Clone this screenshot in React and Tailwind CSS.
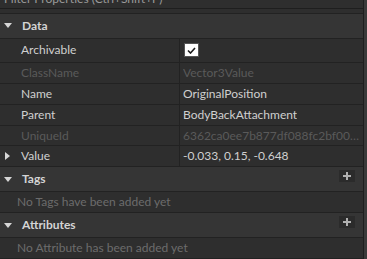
const font = { fontFamily: "Lato, 'Open Sans', sans-serif" };

const DownArrow = () => (
  <svg width="8" height="5" viewBox="0 0 8 5" className="shrink-0">
    <path d="M0 0H8L4 5Z" fill="#d6d6d6" />
  </svg>
);

const RightArrow = () => (
  <svg width="5" height="8" viewBox="0 0 5 8" className="shrink-0">
    <path d="M0 0V8L5 4Z" fill="#d6d6d6" />
  </svg>
);

const PlusButton = () => (
  <div className="flex h-[12px] w-[16px] items-center justify-center bg-[#2b2b2b]">
    <svg width="10" height="10" viewBox="0 0 10 10">
      <path d="M5 1V9M1 5H9" stroke="#b0b0b0" strokeWidth="2" />
    </svg>
  </div>
);

const Header = ({ label, plus }) => (
  <div className="flex h-[25px] items-center border-b border-[#222222] bg-[#353535] pl-[4px] pr-[8px]">
    <DownArrow />
    <span className="ml-[10px] text-[12px] font-bold text-[#d4d4d4]">{label}</span>
    <div className="flex-1" />
    {plus && <div className="-mt-[6px]"><PlusButton /></div>}
  </div>
);

const Row = ({ name, value, disabled, expand, tall, children }) => (
  <div className={`flex ${tall ? "h-[24px]" : "h-[21px]"} border-b border-[#222222] bg-[#2e2e2e] text-[12px]`}>
    <div className="flex w-[180px] items-center border-r border-[#222222] pl-[5px]">
      <div className="w-[16px]">{expand && <RightArrow />}</div>
      <span className={disabled ? "text-[#5a5a5a]" : "text-[#d0d0d0]"}>{name}</span>
    </div>
    <div className="flex min-w-0 flex-1 items-center pl-[3px] pr-[4px]">
      {children ? children : (
        <span className={`truncate ${disabled ? "text-[#5a5a5a]" : "text-[#d0d0d0]"}`}>{value}</span>
      )}
    </div>
  </div>
);

const Empty = ({ text }) => (
  <div className="flex h-[21px] items-center border-b border-[#222222] bg-[#2e2e2e] pl-[17px] text-[12px] text-[#6c6c6c]">
    {text}
  </div>
);

export default function App() {
  return (
    <div className="flex h-[259px] w-[367px] overflow-hidden bg-[#2e2e2e]" style={font}>
      <div className="flex min-w-0 flex-1 flex-col">
        <div className="h-[9px] shrink-0 overflow-hidden border-b border-[#1e1e1e] bg-[#2e2e2e]">
          <div className="-mt-[10px] pl-[4px] text-[12px] text-[#9a9a9a]">Filter Properties (Ctrl+Shift+P)</div>
        </div>
        <div className="h-[5px] shrink-0 border-b border-[#222222] bg-[#2e2e2e]" />
        <Header label="Data" />
        <Row name="Archivable" tall>
          <div className="ml-[1px] flex h-[14px] w-[15px] items-center justify-center border border-[#555555] bg-white">
            <svg width="9" height="7" viewBox="0 0 9 7">
              <path d="M1 3.5L3.5 6L8 1" stroke="#1c1c1c" strokeWidth="1.6" fill="none" />
            </svg>
          </div>
        </Row>
        <Row name="ClassName" value="Vector3Value" disabled />
        <Row name="Name" value="OriginalPosition" />
        <Row name="Parent" value="BodyBackAttachment" />
        <Row name="UniqueId" value="6362ca0ee7b877df088fc2bf00000000" disabled />
        <Row name="Value" value="-0.033, 0.15, -0.648" expand />
        <Header label="Tags" plus />
        <Empty text="No Tags have been added yet" />
        <Header label="Attributes" plus />
        <Empty text="No Attribute has been added yet" />
      </div>
      <div className="w-[4px] border-l border-[#1e1e1e] bg-[#3a3a3a]" />
    </div>
  );
}
